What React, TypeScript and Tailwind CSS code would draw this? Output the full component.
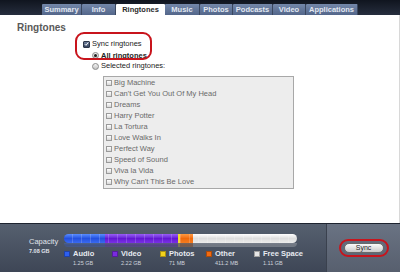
const tabs = [
  { label: 'Summary', w: 'w-[40px]' },
  { label: 'Info', w: 'w-[34px]' },
  { label: 'Ringtones', w: 'w-[49px]', active: true },
  { label: 'Music', w: 'w-[35px]' },
  { label: 'Photos', w: 'w-[33px]' },
  { label: 'Podcasts', w: 'w-[40px]' },
  { label: 'Video', w: 'w-[33px]' },
  { label: 'Applications', w: 'w-[52px]' },
]

const ringtones = [
  'Big Machine',
  "Can't Get You Out Of My Head",
  'Dreams',
  'Harry Potter',
  'La Tortura',
  'Love Walks In',
  'Perfect Way',
  'Speed of Sound',
  'Viva la Vida',
  "Why Can't This Be Love",
]

const legend = [
  { label: 'Audio', size: '1.25 GB', color: 'bg-[#2d5ff0]', w: 'w-[48px]' },
  { label: 'Video', size: '2.22 GB', color: 'bg-[#7a2be0]', w: 'w-[48px]' },
  { label: 'Photos', size: '71 MB', color: 'bg-[#f2d21c]', w: 'w-[46px]' },
  { label: 'Other', size: '411.2 MB', color: 'bg-[#f26a10]', w: 'w-[48px]' },
  { label: 'Free Space', size: '1.11 GB', color: 'bg-[#e6e6e6]', w: 'w-[60px]' },
]

function Radio({ on }: { on?: boolean }) {
  return (
    <span className="w-[7px] h-[7px] rounded-full border border-[#8a8a8a] bg-gradient-to-b from-[#f4f4f4] to-[#c4c4c4] flex items-center justify-center shrink-0">
      {on && <span className="w-[3px] h-[3px] rounded-full bg-[#222]" />}
    </span>
  )
}

function Segments() {
  return (
    <>
      <div className="w-[41px] bg-gradient-to-b from-[#5a8cff] via-[#2450e0] to-[#3a6af0]" />
      <div className="w-[73px] bg-gradient-to-b from-[#9a5cf6] via-[#6416d4] to-[#7a30e4]" />
      <div className="w-[2px] bg-[#f6dc30]" />
      <div className="w-[13px] bg-gradient-to-b from-[#ff9a40] via-[#f06a0a] to-[#f47c20]" />
      <div className="flex-1 bg-gradient-to-b from-[#ffffff] via-[#dedede] to-[#ececec]" />
    </>
  )
}

export default function App() {
  return (
    <div className="w-[400px] h-[272px] flex flex-col overflow-hidden font-['Liberation_Sans',Arial,sans-serif] bg-white">
      {/* tab strip */}
      <div className="h-[15px] bg-gradient-to-b from-[#10151f] to-[#262e3e] flex items-end pl-[42px] shrink-0">
        {tabs.map((t) => (
          <div
            key={t.label}
            className={
              t.active
                ? `${t.w} h-[11px] bg-white text-[#2a2a2a] text-[7.5px] font-bold flex items-center justify-center rounded-t-[1px]`
                : `${t.w} h-[11px] bg-gradient-to-b from-[#7488aa] to-[#53668a] text-[#e2e8f2] text-[7.5px] font-bold flex items-center justify-center border-r border-[#3a475f] rounded-t-[1px]`
            }
          >
            {t.label}
          </div>
        ))}
      </div>

      {/* content */}
      <div className="h-[208px] relative border-r border-[#d8d8d8] shrink-0">
        <div className="pl-[17px] pt-[6px] h-[21px] text-[10px] font-bold text-[#595959] leading-[13px]">Ringtones</div>

        <div className="pl-[83px] pt-[2px]">
          <div className="h-[12px] flex items-center gap-[2px]">
            <span className="w-[7px] h-[7px] rounded-[1px] bg-gradient-to-b from-[#6d7c98] to-[#34425c] border border-[#2c3648] flex items-center justify-center">
              <svg width="6" height="6" viewBox="0 0 6 6">
                <path d="M1 3.2 L2.4 4.6 L5 1.2" stroke="#fff" strokeWidth="1.2" fill="none" />
              </svg>
            </span>
            <span className="text-[7.5px] text-[#222]">Sync ringtones</span>
          </div>
          <div className="h-[11px] flex items-center gap-[2px] pl-[9px]">
            <Radio on />
            <span className="text-[7.5px] font-bold text-[#222]">All ringtones</span>
          </div>
          <div className="h-[10px] flex items-center gap-[2px] pl-[9px]">
            <Radio />
            <span className="text-[7.5px] text-[#222]">Selected ringtones:</span>
          </div>
        </div>

        <div className="ml-[103px] mt-[5px] w-[191px] h-[113px] border border-[#a8a8a8] bg-[#ededed] flex flex-col">
          {ringtones.map((r) => (
            <div key={r} className="h-[11px] flex items-center pl-[2px] gap-[2px]">
              <span className="w-[6px] h-[6px] border border-[#9a9a9a] bg-gradient-to-b from-white to-[#d8d8d8] shrink-0" />
              <span className="text-[7.5px] text-[#6a6a6a]">{r}</span>
            </div>
          ))}
        </div>

        <div className="absolute left-[75px] top-[17px] w-[77px] h-[28px] rounded-[9px] border-2 border-[#c8141c]" />
      </div>

      {/* capacity bar */}
      <div className="flex-1 flex border-t border-[#1e2430]">
        <div className="w-[327px] flex bg-gradient-to-b from-[#56606f] to-[#3e4656] border-r border-[#3a414e]">
          <div className="w-[64px] pl-[29px] pt-[13px] text-[#e0e4ec]">
            <div className="text-[7.5px] leading-[10px]">Capacity</div>
            <div className="text-[5.5px] leading-[8px] font-bold">7.08 GB</div>
          </div>
          <div className="pt-[10px]">
            <div className="relative w-[233px] h-[9px] rounded-full overflow-hidden flex">
              <Segments />
              <div className="absolute inset-0 bg-[repeating-linear-gradient(90deg,transparent_0px,transparent_8px,rgba(255,255,255,0.18)_8px,rgba(255,255,255,0.18)_9px)]" />
            </div>
            <div className="w-[233px] h-[4px] flex opacity-25 rounded-b-full overflow-hidden">
              <Segments />
            </div>
            <div className="flex mt-[3px]">
              {legend.map((l) => (
                <div key={l.label} className={`${l.w} flex gap-[3px]`}>
                  <span className={`w-[6px] h-[6px] mt-[1px] ${l.color} border border-[rgba(0,0,0,0.3)] shrink-0`} />
                  <div className="text-[#e6eaf0]">
                    <div className="text-[7.5px] leading-[8px] font-bold">{l.label}</div>
                    <div className="text-[5.5px] leading-[10px] text-[#cfd4dc]">{l.size}</div>
                  </div>
                </div>
              ))}
            </div>
          </div>
        </div>
        <div className="flex-1 flex items-center justify-center bg-gradient-to-b from-[#6a7383] to-[#575f6e]">
          <div className="w-[50px] h-[18px] rounded-[9px] border-2 border-[#c8141c] flex items-center justify-center">
            <div className="w-[40px] h-[10px] rounded-[5px] bg-gradient-to-b from-[#fbfbfb] to-[#c9c9c9] border border-[#6a6a6a] text-[7px] text-[#222] flex items-center justify-center">
              Sync
            </div>
          </div>
        </div>
      </div>
    </div>
  )
}
